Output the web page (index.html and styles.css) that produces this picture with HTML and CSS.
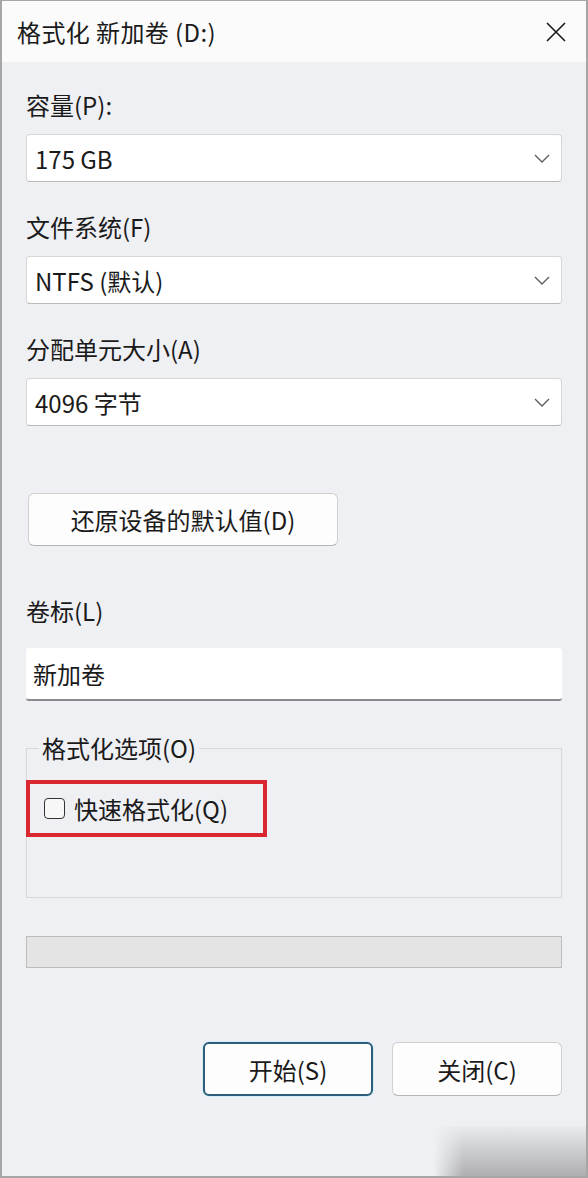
FILE: index.html
```html
<!DOCTYPE html>
<html lang="zh-CN">
<head>
    <meta charset="UTF-8">
    <meta name="viewport" content="width=device-width, initial-scale=1.0">
    <title>格式化 新加卷 (D:)</title>
    <link rel="stylesheet" href="styles.css">
</head>
<body>
    <div class="window">
        <!-- Title bar -->
        <div class="title-bar">
            <span class="title">格式化 新加卷 (D:)</span>
            <svg class="close-icon" width="20" height="20" viewBox="0 0 20 20">
                <path d="M1 1 L19 19 M19 1 L1 19" stroke="#1a1a1a" stroke-width="1.6" fill="none"/>
            </svg>
        </div>

        <div class="content">
            <div class="field-label first">容量(P):</div>
            <div class="select">
                <span>175 GB</span>
                <svg class="chevron" width="16" height="9" viewBox="0 0 16 9">
                    <path d="M1 1 L8 8 L15 1" stroke="#5a5a5a" stroke-width="1.3" fill="none"/>
                </svg>
            </div>

            <div class="field-label">文件系统(F)</div>
            <div class="select">
                <span>NTFS (默认)</span>
                <svg class="chevron" width="16" height="9" viewBox="0 0 16 9">
                    <path d="M1 1 L8 8 L15 1" stroke="#5a5a5a" stroke-width="1.3" fill="none"/>
                </svg>
            </div>

            <div class="field-label">分配单元大小(A)</div>
            <div class="select">
                <span>4096 字节</span>
                <svg class="chevron" width="16" height="9" viewBox="0 0 16 9">
                    <path d="M1 1 L8 8 L15 1" stroke="#5a5a5a" stroke-width="1.3" fill="none"/>
                </svg>
            </div>

            <button class="btn restore-btn">还原设备的默认值(D)</button>

            <div class="field-label volume-label">卷标(L)</div>
            <div class="text-input">新加卷</div>

            <fieldset class="options">
                <legend>格式化选项(O)</legend>
                <div class="highlight">
                    <span class="checkbox"></span>
                    <span>快速格式化(Q)</span>
                </div>
            </fieldset>

            <div class="progress"></div>

            <div class="actions">
                <button class="btn action-btn primary">开始(S)</button>
                <button class="btn action-btn">关闭(C)</button>
            </div>
        </div>

        <div class="watermark"></div>
    </div>
</body>
</html>
```

FILE: styles.css
```css
body {
    margin: 0;
    font-family: "Noto Sans CJK SC", "Noto Sans", sans-serif;
    color: #1a1a1a;
    background: #ffffff;
}
.window {
    position: relative;
    width: 588px;
    height: 1178px;
    box-sizing: border-box;
    border: 2px solid #a6a6a6;
    border-top-width: 1px;
    background: #eff0f3;
    overflow: hidden;
}
.title-bar {
    height: 61px;
    background: #fbfbfc;
    display: flex;
    align-items: center;
    justify-content: space-between;
    padding: 0 20px 0 15px;
}
.title {
    font-size: 24px;
    letter-spacing: 0.4px;
}
.content {
    padding: 28px 24px 0 24px;
}
.field-label {
    font-size: 24px;
    height: 30px;
    line-height: 30px;
    margin-top: 30px;
    margin-bottom: 14px;
}
.field-label.first {
    margin-top: 0;
}
.select {
    height: 48px;
    box-sizing: border-box;
    background: #ffffff;
    border: 1px solid #d6d6d6;
    border-bottom-color: #b8b8b8;
    border-radius: 4px;
    display: flex;
    align-items: center;
    justify-content: space-between;
    padding: 0 9px 0 8px;
    font-size: 24px;
}
.chevron {
    margin-right: 2px;
}
.btn {
    font-family: inherit;
    color: #1a1a1a;
    background: #fdfdfd;
    border: 1px solid #d0d0d0;
    border-bottom-color: #b5b5b5;
    border-radius: 6px;
    font-size: 24px;
}
.restore-btn {
    display: block;
    width: 310px;
    height: 53px;
    margin: 67px 0 0 2px;
}
.field-label.volume-label {
    margin-top: 50px;
    margin-bottom: 22px;
}
.text-input {
    height: 53px;
    box-sizing: border-box;
    background: #ffffff;
    border-bottom: 2px solid #8a8a8a;
    border-radius: 3px;
    display: flex;
    align-items: center;
    padding: 0 7px;
    font-size: 24px;
}
.options {
    margin: 33px 0 0 0;
    padding: 18px 0 56px 0;
    border: 1px solid #d8d8d8;
    height: 164px;
    box-sizing: border-box;
}
.options legend {
    font-size: 24px;
    padding: 0 3px;
    margin-left: 12px;
    line-height: 28px;
}
.highlight {
    width: 241px;
    height: 57px;
    box-sizing: border-box;
    margin-left: -1px;
    border: 4px solid #d9282f;
    display: flex;
    align-items: center;
    gap: 9px;
    padding-left: 14px;
    font-size: 24px;
}
.checkbox {
    width: 21px;
    height: 21px;
    box-sizing: border-box;
    border: 1.5px solid #333333;
    border-radius: 4px;
    background: #f7f7f8;
}
.progress {
    height: 32px;
    margin-top: 38px;
    box-sizing: border-box;
    background: #e4e4e4;
    border: 1px solid #bdbdbd;
}
.actions {
    display: flex;
    justify-content: flex-end;
    gap: 19px;
    margin-top: 74px;
}
.action-btn {
    width: 170px;
    height: 54px;
}
.action-btn.primary {
    border: 2px solid #2d5d7b;
    box-shadow: 0 0 0 1px #d4ecf8;
}
.watermark {
    position: absolute;
    right: 0;
    bottom: 0;
    width: 152px;
    height: 50px;
    background: linear-gradient(to bottom, rgba(140, 140, 145, 0.05), rgba(120, 120, 125, 0.55));
    -webkit-mask-image: linear-gradient(to right, transparent, #000 30px);
    mask-image: linear-gradient(to right, transparent, #000 30px);
}
```
